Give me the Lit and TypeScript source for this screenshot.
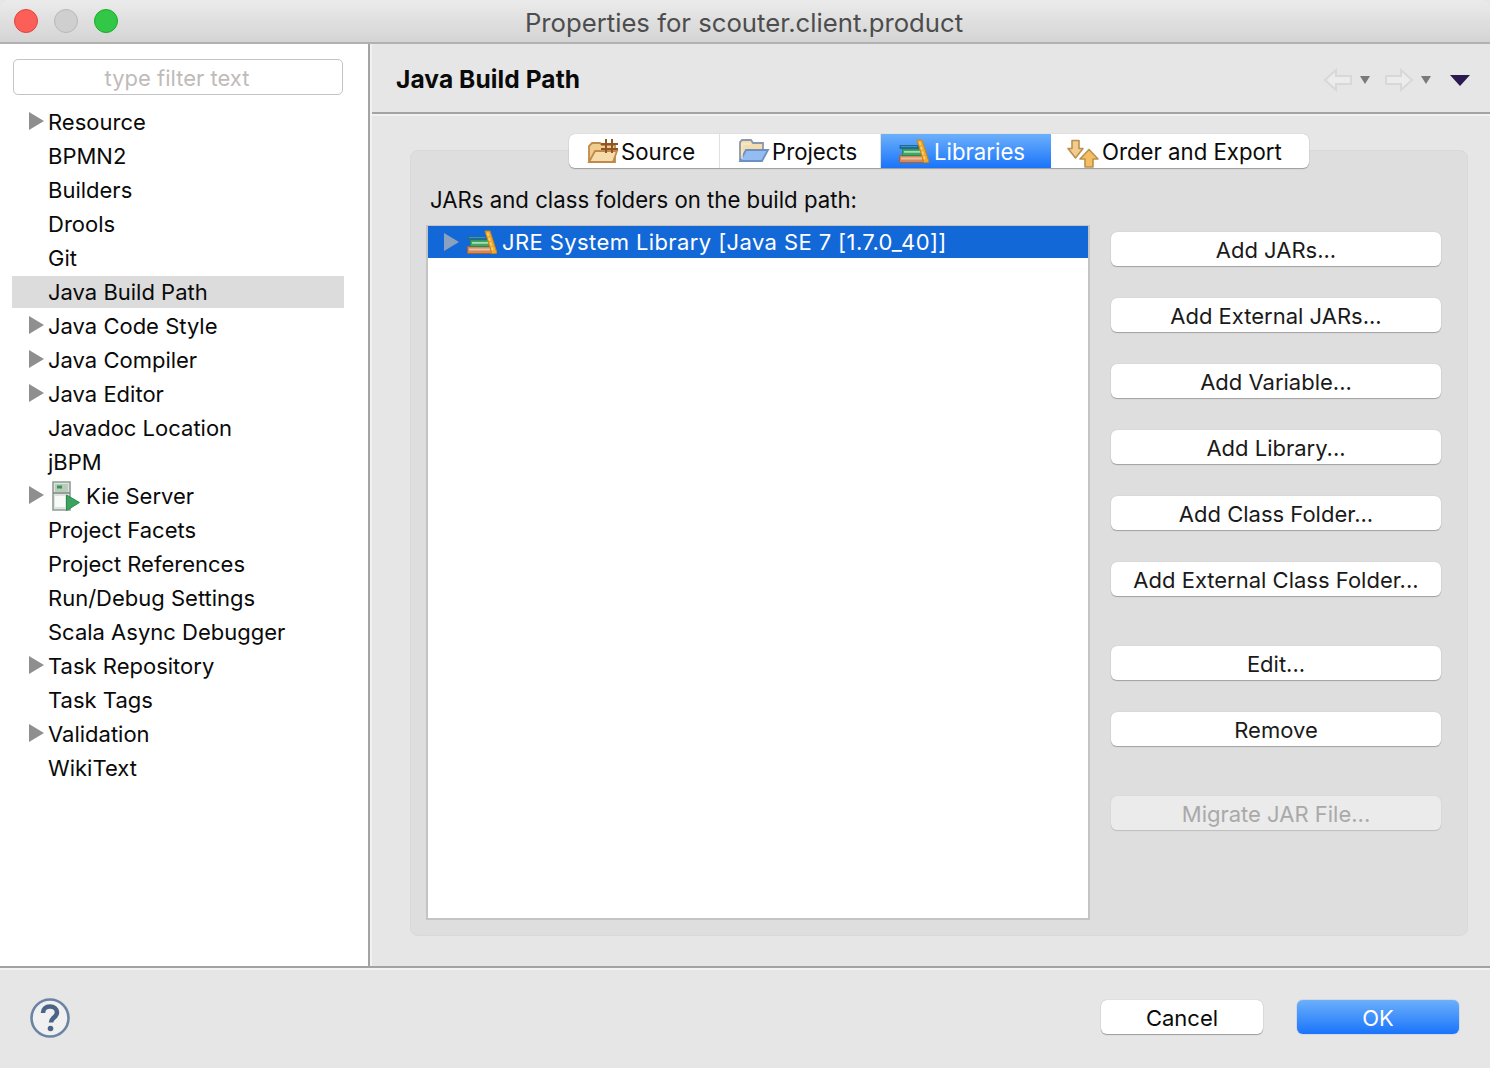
import { LitElement, html, css, svg } from "lit";
import { customElement } from "lit/decorators.js";

const tree: { t: string; arrow?: boolean; sel?: boolean; kie?: boolean }[] = [
  { t: "Resource", arrow: true }, { t: "BPMN2" }, { t: "Builders" }, { t: "Drools" }, { t: "Git" },
  { t: "Java Build Path", sel: true }, { t: "Java Code Style", arrow: true }, { t: "Java Compiler", arrow: true },
  { t: "Java Editor", arrow: true }, { t: "Javadoc Location" }, { t: "jBPM" }, { t: "Kie Server", arrow: true, kie: true },
  { t: "Project Facets" }, { t: "Project References" }, { t: "Run/Debug Settings" }, { t: "Scala Async Debugger" },
  { t: "Task Repository", arrow: true }, { t: "Task Tags" }, { t: "Validation", arrow: true }, { t: "WikiText" },
];

const books = svg`<svg class="ic" width="30" height="24" viewBox="0 0 30 24">
  <path d="M0.500 16.500h24v7h-24z" fill="#d08a5e" stroke="#a9602f"/><path d="M2 18.500h21v2H2z" fill="#edc09f"/>
  <path d="M3.500 10h21v6.500h-21z" fill="#43a566" stroke="#2c8a50"/><path d="M5 12h18v1.800H5z" fill="#a5dcb4"/>
  <path d="M0.500 6h20v4h-20z" fill="#1f6c95"/><path d="M2 7h16v1H2z" fill="#3d94c0"/>
  <path d="M18 1h5l7 22-5 1z" fill="#f0aa30" stroke="#cc8512"/>
  <path d="M20.500 3l5.500 18" stroke="#fbd67e" stroke-width="1.600" stroke-dasharray="3 2"/>
</svg>`;

const srcFolder = svg`<svg class="ic" width="32" height="26" viewBox="0 0 32 26">
  <path d="M2 24V8l3-3h8l2 2h13v17z" fill="#f0cc8e" stroke="#c08a4a" stroke-width="1.800"/>
  <path d="M2 24l6-11h22l-4 11z" fill="#f7dcab" stroke="#c08a4a" stroke-width="1.800"/>
  <path d="M19 1v14M25 1v14M14 6h17M14 11h17" stroke="#8f5526" stroke-width="2"/>
</svg>`;

const projFolder = svg`<svg class="ic" width="32" height="26" viewBox="0 0 32 26">
  <path d="M2 22V4l2-2h9l2 3h10v6" fill="#f5dcae" stroke="#8a98ad" stroke-width="1.800"/>
  <path d="M2 23l6-11h22l-6 11z" fill="#93bcf0" stroke="#6d90c4" stroke-width="1.800"/>
  <path d="M4 21V6h9" fill="none" stroke="#f9e8c8" stroke-width="1.400"/>
</svg>`;

const orderIc = svg`<svg class="ic" width="34" height="34" viewBox="0 0 34 34">
  <path d="M6 6.500h7v8h4l-7.500 9.500L2 14.500h4z" fill="#f3cb8f" stroke="#b8924e" stroke-width="1.600" stroke-linejoin="round"/>
  <path d="M19 33v-8h-5l9-9.500 9 9.500h-5v8z" fill="#f6bd63" stroke="#b8924e" stroke-width="1.600" stroke-linejoin="round"/>
</svg>`;

const kieIc = svg`<svg class="kie" width="28" height="30" viewBox="0 0 28 30">
  <path d="M1 1h17v28H1z" fill="#dfe3e0" stroke="#8f9d95" stroke-width="1.600"/>
  <path d="M3 3h13v8H3z" fill="#bccabe"/><path d="M5 4.500h5v3H5z" fill="#2f9a4f"/>
  <path d="M1 12h17" stroke="#7f8c85" stroke-width="1.600"/><path d="M3 15h10v11H3z" fill="#f8faf8"/>
  <path d="M14.500 14l13 7.500-13 8z" fill="#3aa35f" stroke="#2c8a4a"/>
</svg>`;

const tabs: { t: string; w: number; icon: unknown; active?: boolean }[] = [
  { t: "Source", w: 151, icon: srcFolder },
  { t: "Projects", w: 161, icon: projFolder },
  { t: "Libraries", w: 170, icon: books, active: true },
  { t: "Order and Export", w: 258, icon: orderIc },
];

@customElement("app-root")
export class AppRoot extends LitElement {
  static styles = css`
    :host { display: block; width: 1490px; height: 1068px; overflow: hidden; background: #e6e6e6;
      font-family: Inter, "Liberation Sans", sans-serif; font-size: 22px; color: #0a0a0a; }
    * { box-sizing: border-box; }
    .titlebar { height: 44px; display: flex; align-items: center; position: relative;
      background: linear-gradient(#ebebeb, #d4d4d4); border-bottom: 2px solid #b1b1b1; border-radius: 10px 10px 0 0; padding-left: 14px; gap: 16px; }
    .dot { width: 24px; height: 24px; border-radius: 50%; border: 1px solid; }
    .red { background: #fc5f57; border-color: #e0443e; }
    .gray { background: #cfcfcf; border-color: #b8b8b8; }
    .green { background: #33c748; border-color: #1aab29; }
    .title { position: absolute; left: 0; right: 0; text-align: center; color: #4d4d4d; font-size: 25.700px; line-height: 44px; top: 1px; padding-right: 2px; }
    .main { height: 922px; display: flex; }
    .side { width: 370px; flex: none; background: #fff; border-right: 2px solid #a3a3a3; padding: 15px 24px 0 12px; }
    .filter { margin: 0 0 0 1px; width: 330px; height: 36px; border: 1.500px solid #c4c4c4; border-radius: 5px; text-align: center;
      color: #bfbbb8; line-height: 37px; padding-right: 2px; }
    .tree { margin-top: 10px; }
    .row { height: 34px; display: flex; align-items: center; padding: 0 0 0 36px; position: relative; white-space: nowrap; }
    .row.sel::before { content: ""; position: absolute; left: 0; right: 0; top: 1px; bottom: 1px; background: #dcdcdc; }
    .row span { position: relative; }
    .arrow { position: absolute; left: 17px; top: 7px; width: 0; height: 0; border-left: 15px solid #8f8f8f;
      border-top: 9px solid transparent; border-bottom: 9px solid transparent; }
    .kie { margin: 0 6px 0 4px; flex: none; position: relative; }
    .right { flex: 1; display: flex; flex-direction: column; min-width: 0; border-left: 2px solid #f1f1f1; }
    .head { height: 70px; flex: none; border-bottom: 2px solid #a3a3a3; box-shadow: 0 2px 0 #f1f1f1; display: flex; align-items: center; padding: 2px 20px 0 24px; position: relative; }
    .head h1 { margin: 0; font-size: 24.500px; font-weight: 700; flex: 1; letter-spacing: 0.100px; }
    .nav { display: flex; align-items: center; margin-top: 2px; }
    .tri { width: 0; height: 0; border-left: 5px solid transparent; border-right: 5px solid transparent; border-top: 8px solid #7a7a7a; }
    .menu { width: 0; height: 0; border-left: 10px solid transparent; border-right: 10px solid transparent; border-top: 11px solid #2a1a50; margin-left: 19px; }
    .nav svg { display: block; margin-right: 7px; }
    .nav .tri + svg { margin-left: 14px; }
    .content { flex: 1; min-height: 0; padding: 20px 22px 30px 38px; display: flex; flex-direction: column; }
    .tabs { display: flex; height: 34px; flex: none; align-self: center; background: #fff; border-radius: 6px; position: relative; z-index: 1;
      box-shadow: 0 1px 1px #9c9c9c, 0 0 1px #a8a8a8; overflow: hidden; font-size: 22.200px; }
    .tab { display: flex; align-items: center; padding-left: 18px; border-right: 1px solid #e0e0e0; gap: 2px; white-space: nowrap; }
    .tab:last-child { border-right: 0; padding-left: 15px; }
    .tab.on { background: linear-gradient(#6cb0fb, #1a74fb); color: #fff; border-right: 0; gap: 5px; }
    .ic { flex: none; display: block; }
    .panel { flex: 1; min-height: 0; margin-top: -18px; background: #dedede; border: 1px solid #d9d9d9; border-radius: 8px; padding: 36px 26px 15px 15px; display: flex; flex-direction: column; }
    .lbl { height: 38px; line-height: 26px; padding-left: 4px; font-size: 22.200px; }
    .body { flex: 1; display: flex; min-height: 0; }
    .list { width: 664px; flex: none; background: #fff; border: 2px solid #c4c4c4; }
    .item { height: 32px; margin-top: -1px; background: #1368d8; color: #fff; display: flex; align-items: center; padding-left: 16px; position: relative; white-space: nowrap; }
    .item i { width: 0; height: 0; border-left: 15px solid #8aa1bf; border-top: 9px solid transparent; border-bottom: 9px solid transparent; margin-right: 8px; }
    .item .ic { margin-right: 5px; }
    .item span { letter-spacing: 0.400px; }
    .btns { margin-left: 21px; width: 330px; flex: none; padding-top: 7px; display: flex; flex-direction: column; }
    .btn { height: 34px; flex: none; margin-bottom: 32px; background: #fff; border-radius: 6px; text-align: center; line-height: 36px;
      box-shadow: 0 1px 1px #a0a0a0, 0 0 1px #b0b0b0; white-space: nowrap; color: #1a1a1a; }
    .btn.wide { margin-bottom: 50px; }
    .btn.dis { background: #ebebeb; color: #a9a9a9; box-shadow: 0 1px 1px #bdbdbd, 0 0 1px #c4c4c4; }
    .footer { height: 102px; border-top: 2px solid #a3a3a3; box-shadow: inset 0 2px 0 #f2f2f2; display: flex; align-items: center; padding: 0 31px 2px 29px; }
    .help { margin: 2px auto 0 0; display: block; }
    .fb { height: 34px; width: 162px; background: #fff; border-radius: 6px; text-align: center; line-height: 36px; box-shadow: 0 1px 1px #9c9c9c, 0 0 1px #aaa; }
    .fb.ok { width: 162px; margin-left: 34px; color: #fff; background: linear-gradient(#6cb0fb, #1a74fb); box-shadow: 0 0 1px #1a6be0; }
  `;

  render() {
    const btns = [
      ["Add JARs..."], ["Add External JARs..."], ["Add Variable..."], ["Add Library..."], ["Add Class Folder..."],
      ["Add External Class Folder...", "wide"], ["Edit..."], ["Remove", "wide"], ["Migrate JAR File...", "dis"],
    ];
    return html`
      <div class="titlebar">
        <div class="dot red"></div><div class="dot gray"></div><div class="dot green"></div>
        <div class="title">Properties for scouter.client.product</div>
      </div>
      <div class="main">
        <div class="side">
          <div class="filter">type filter text</div>
          <div class="tree">
            ${tree.map((r) => html`<div class="row ${r.sel ? "sel" : ""}">
              ${r.arrow ? html`<div class="arrow"></div>` : ""}
              ${r.kie ? kieIc : ""}<span>${r.t}</span></div>`)}
          </div>
        </div>
        <div class="right">
          <div class="head">
            <h1>Java Build Path</h1>
            <div class="nav">
              <svg width="30" height="24" viewBox="0 0 30 24"><path d="M13 2L2 12l11 10v-6h15V8H13z" fill="#ececec" stroke="#d8d8d8" stroke-width="2"/></svg>
              <div class="tri"></div>
              <svg width="30" height="24" viewBox="0 0 30 24"><path d="M17 2l11 10-11 10v-6H2V8h15z" fill="#ececec" stroke="#d8d8d8" stroke-width="2"/></svg>
              <div class="tri"></div>
              <div class="menu"></div>
            </div>
          </div>
          <div class="content">
            <div class="tabs">
              ${tabs.map((t) => html`<div class="tab ${t.active ? "on" : ""}" style="width:${t.w}px">${t.icon}<span>${t.t}</span></div>`)}
            </div>
            <div class="panel">
              <div class="lbl">JARs and class folders on the build path:</div>
              <div class="body">
                <div class="list">
                  <div class="item"><i></i>${books}<span>JRE System Library [Java SE 7 [1.7.0_40]]</span></div>
                </div>
                <div class="btns">
                  ${btns.map(([t, c]) => html`<div class="btn ${c ?? ""}">${t}</div>`)}
                </div>
              </div>
            </div>
          </div>
        </div>
      </div>
      <div class="footer">
        <svg class="help" width="42" height="42" viewBox="0 0 42 42">
          <circle cx="21" cy="21" r="18.500" fill="#f0f0f0" stroke="#6b84a4" stroke-width="2.600"/>
          <path d="M14 16c0-4 3-6.500 7-6.500s7 2.500 7 6c0 5-6 5-6 10" fill="none" stroke="#4a6488" stroke-width="4.600"/>
          <circle cx="21.500" cy="31.500" r="2.800" fill="#4a6488"/>
        </svg>
        <div class="fb">Cancel</div>
        <div class="fb ok">OK</div>
      </div>
    `;
  }
}
